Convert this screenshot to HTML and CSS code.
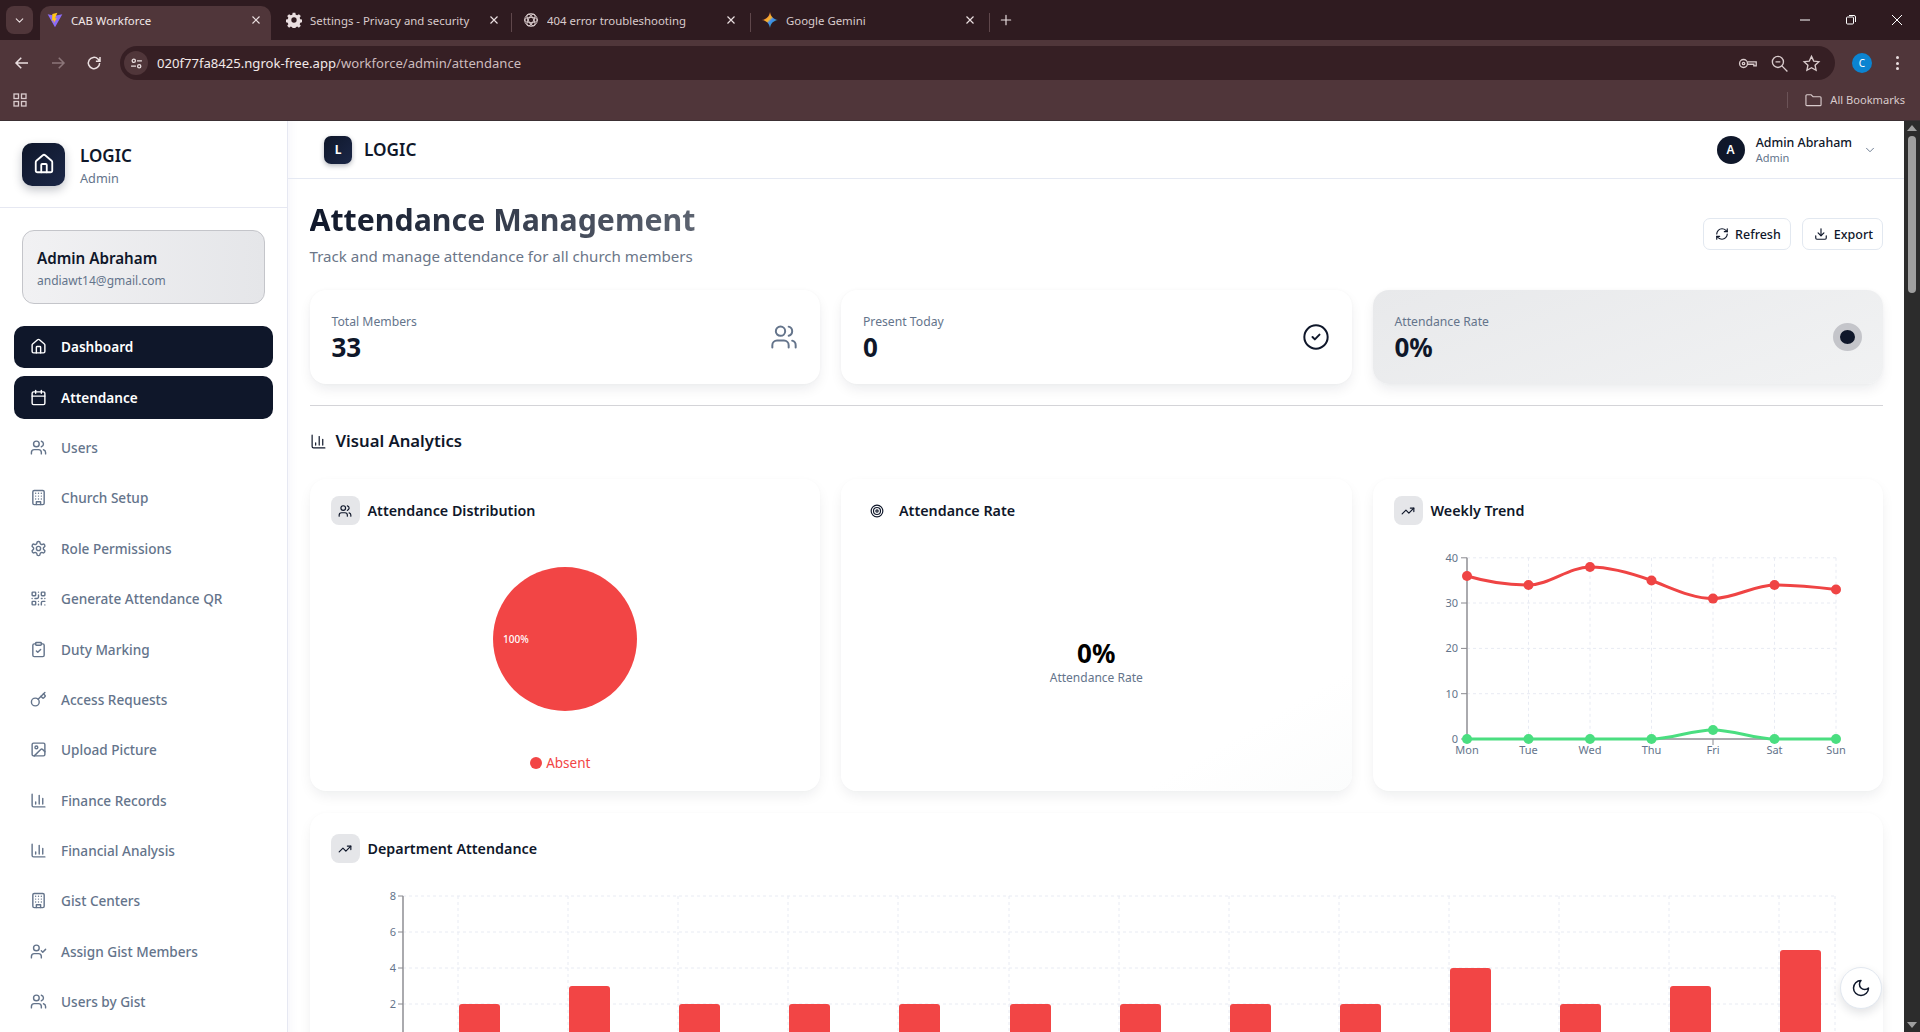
FILE: index.html
```html
<!DOCTYPE html>
<html lang="en">
<head>
    <meta charset="UTF-8" />
    <title>CAB Workforce</title>
    <link rel="stylesheet" href="styles.css">
</head>
<body>
    <svg class="defs" width="0" height="0">
        <symbol id="i-home" viewBox="0 0 24 24"><path d="M15 21v-8a1 1 0 0 0-1-1h-4a1 1 0 0 0-1 1v8"/><path d="M3 10a2 2 0 0 1 .709-1.528l7-5.999a2 2 0 0 1 2.582 0l7 5.999A2 2 0 0 1 21 10v9a2 2 0 0 1-2 2H5a2 2 0 0 1-2-2z"/></symbol>
        <symbol id="i-calendar" viewBox="0 0 24 24"><path d="M8 2v4"/><path d="M16 2v4"/><rect width="18" height="18" x="3" y="4" rx="2"/><path d="M3 10h18"/></symbol>
        <symbol id="i-users" viewBox="0 0 24 24"><path d="M16 21v-2a4 4 0 0 0-4-4H6a4 4 0 0 0-4 4v2"/><circle cx="9" cy="7" r="4"/><path d="M22 21v-2a4 4 0 0 0-3-3.87"/><path d="M16 3.13a4 4 0 0 1 0 7.75"/></symbol>
        <symbol id="i-building" viewBox="0 0 24 24"><rect width="16" height="20" x="4" y="2" rx="2" ry="2"/><path d="M9 22v-4h6v4"/><path d="M8 6h.01M16 6h.01M12 6h.01M12 10h.01M12 14h.01M16 10h.01M16 14h.01M8 10h.01M8 14h.01"/></symbol>
        <symbol id="i-settings" viewBox="0 0 24 24"><path d="M12.22 2h-.44a2 2 0 0 0-2 2v.18a2 2 0 0 1-1 1.73l-.43.25a2 2 0 0 1-2 0l-.15-.08a2 2 0 0 0-2.73.73l-.22.38a2 2 0 0 0 .73 2.73l.15.1a2 2 0 0 1 1 1.72v.51a2 2 0 0 1-1 1.74l-.15.09a2 2 0 0 0-.73 2.73l.22.38a2 2 0 0 0 2.73.73l.15-.08a2 2 0 0 1 2 0l.43.25a2 2 0 0 1 1 1.73V20a2 2 0 0 0 2 2h.44a2 2 0 0 0 2-2v-.18a2 2 0 0 1 1-1.73l.43-.25a2 2 0 0 1 2 0l.15.08a2 2 0 0 0 2.73-.73l.22-.39a2 2 0 0 0-.73-2.73l-.15-.08a2 2 0 0 1-1-1.74v-.5a2 2 0 0 1 1-1.74l.15-.09a2 2 0 0 0 .73-2.73l-.22-.38a2 2 0 0 0-2.73-.73l-.15.08a2 2 0 0 1-2 0l-.43-.25a2 2 0 0 1-1-1.73V4a2 2 0 0 0-2-2z"/><circle cx="12" cy="12" r="3"/></symbol>
        <symbol id="i-qr" viewBox="0 0 24 24"><rect width="5" height="5" x="3" y="3" rx="1"/><rect width="5" height="5" x="16" y="3" rx="1"/><rect width="5" height="5" x="3" y="16" rx="1"/><path d="M21 16h-3a2 2 0 0 0-2 2v3"/><path d="M21 21v.01"/><path d="M12 7v3a2 2 0 0 1-2 2H7"/><path d="M3 12h.01"/><path d="M12 3h.01"/><path d="M12 16v.01"/><path d="M16 12h1"/><path d="M21 12v.01"/><path d="M12 21v-1"/></symbol>
        <symbol id="i-clipboard" viewBox="0 0 24 24"><rect width="8" height="4" x="8" y="2" rx="1" ry="1"/><path d="M16 4h2a2 2 0 0 1 2 2v14a2 2 0 0 1-2 2H6a2 2 0 0 1-2-2V6a2 2 0 0 1 2-2h2"/><path d="m9 14 2 2 4-4"/></symbol>
        <symbol id="i-key" viewBox="0 0 24 24"><path d="m15.5 7.5 2.3 2.3a1 1 0 0 0 1.4 0l2.1-2.1a1 1 0 0 0 0-1.4L19 4"/><path d="m21 2-9.6 9.6"/><circle cx="7.5" cy="15.5" r="5.5"/></symbol>
        <symbol id="i-image" viewBox="0 0 24 24"><rect width="18" height="18" x="3" y="3" rx="2" ry="2"/><circle cx="9" cy="9" r="2"/><path d="m21 15-3.086-3.086a2 2 0 0 0-2.828 0L6 21"/></symbol>
        <symbol id="i-chart" viewBox="0 0 24 24"><path d="M3 3v16a2 2 0 0 0 2 2h16"/><path d="M18 17V9"/><path d="M13 17V5"/><path d="M8 17v-3"/></symbol>
        <symbol id="i-usercheck" viewBox="0 0 24 24"><path d="M16 21v-2a4 4 0 0 0-4-4H6a4 4 0 0 0-4 4v2"/><circle cx="9" cy="7" r="4"/><polyline points="16 11 18 13 22 9"/></symbol>
        <symbol id="i-refresh" viewBox="0 0 24 24"><path d="M3 12a9 9 0 0 1 9-9 9.75 9.75 0 0 1 6.74 2.74L21 8"/><path d="M21 3v5h-5"/><path d="M21 12a9 9 0 0 1-9 9 9.75 9.75 0 0 1-6.74-2.74L3 16"/><path d="M8 16H3v5"/></symbol>
        <symbol id="i-download" viewBox="0 0 24 24"><path d="M21 15v4a2 2 0 0 1-2 2H5a2 2 0 0 1-2-2v-4"/><polyline points="7 10 12 15 17 10"/><line x1="12" x2="12" y1="15" y2="3"/></symbol>
        <symbol id="i-check" viewBox="0 0 24 24"><circle cx="12" cy="12" r="10"/><path d="m9 12 2 2 4-4"/></symbol>
        <symbol id="i-target" viewBox="0 0 24 24"><circle cx="12" cy="12" r="10"/><circle cx="12" cy="12" r="6"/><circle cx="12" cy="12" r="2"/></symbol>
        <symbol id="i-trend" viewBox="0 0 24 24"><polyline points="22 7 13.5 15.5 8.5 10.5 2 17"/><polyline points="16 7 22 7 22 13"/></symbol>
        <symbol id="i-moon" viewBox="0 0 24 24"><path d="M12 3a6 6 0 0 0 9 9 9 9 0 1 1-9-9Z"/></symbol>
        <symbol id="i-chevron" viewBox="0 0 24 24"><path d="m6 9 6 6 6-6"/></symbol>
        <symbol id="i-x" viewBox="0 0 24 24"><path d="M6 6l12 12M18 6 6 18"/></symbol>
    </svg>

    <!-- browser chrome -->
    <header class="chrome">
        <div class="tabstrip">
            <div class="tabsearch"><svg class="ic c-13"><use href="#i-chevron"/></svg></div>
            <div class="tab active">
                <svg class="favicon" viewBox="0 0 24 24"><path d="M1 3.5 12 23 23 3.5 12 5.5z" fill="#8b6cf6"/><path d="M15.5 1 8 3l-.5 10 3-.6-.6 4.6 5-8-3 .6z" fill="#ffc517"/></svg>
                <span class="tabname">CAB Workforce</span>
                <svg class="tabx"><use href="#i-x"/></svg>
            </div>
            <div class="tab second">
                <svg class="favicon" viewBox="0 0 24 24"><path fill="#eadfe0" fill-rule="evenodd" d="M10 1h4l.6 3 2.2.9 2.6-1.7 2.8 2.8-1.7 2.6.9 2.2 3 .6v4l-3 .6-.9 2.2 1.7 2.6-2.8 2.8-2.6-1.7-2.2.9-.6 3h-4l-.6-3-2.2-.9-2.6 1.7-2.8-2.8 1.7-2.6-.9-2.2-3-.6v-4l3-.6.9-2.2-1.7-2.6 2.8-2.8 2.6 1.7 2.2-.9zM12 8a4 4 0 1 0 0 8 4 4 0 0 0 0-8z"/></svg>
                <span class="tabname">Settings - Privacy and security</span>
                <svg class="tabx"><use href="#i-x"/></svg>
            </div>
            <div class="tab sep">
                <svg class="favicon knot" viewBox="0 0 24 24"><circle cx="12" cy="12" r="9.5"/><ellipse cx="12" cy="12" rx="9.5" ry="4"/><ellipse cx="12" cy="12" rx="9.5" ry="4" transform="rotate(60 12 12)"/><ellipse cx="12" cy="12" rx="9.5" ry="4" transform="rotate(120 12 12)"/></svg>
                <span class="tabname">404 error troubleshooting</span>
                <svg class="tabx"><use href="#i-x"/></svg>
            </div>
            <div class="tab sep">
                <svg class="favicon" viewBox="0 0 24 24">
                    <defs><linearGradient id="gem" x1="0" y1="0" x2="1" y2="1"><stop offset="0" stop-color="#ef4a4a"/><stop offset=".45" stop-color="#f7b52c"/><stop offset=".55" stop-color="#3f8cf5"/><stop offset="1" stop-color="#2fae5b"/></linearGradient></defs>
                    <path fill="url(#gem)" d="M12 0c1 6.5 5 11 12 12-7 1-11 5.5-12 12-1-6.5-5-11-12-12 7-1 11-5.5 12-12z"/>
                </svg>
                <span class="tabname">Google Gemini</span>
                <svg class="tabx"><use href="#i-x"/></svg>
            </div>
            <div class="newtab sep"><svg class="ic c-14" viewBox="0 0 24 24"><path d="M12 4v16M4 12h16"/></svg></div>
            <div class="winctl">
                <svg class="ic" viewBox="0 0 12 12"><path d="M1 6h10"/></svg>
                <svg class="ic" viewBox="0 0 12 12"><rect x="1.5" y="3" width="7" height="7" rx="1"/><path d="M4 1.5h5a1.5 1.5 0 0 1 1.5 1.5v5"/></svg>
                <svg class="ic" viewBox="0 0 12 12"><path d="M1 1l10 10M11 1 1 11"/></svg>
            </div>
        </div>
        <div class="toolbar">
            <svg class="nav-btn" viewBox="0 0 24 24"><path d="M20 12H5M11 5l-7 7 7 7"/></svg>
            <svg class="nav-btn dim" viewBox="0 0 24 24"><path d="M4 12h15M13 5l7 7-7 7"/></svg>
            <svg class="nav-btn" viewBox="0 0 24 24"><path d="M19.5 12a7.5 7.5 0 1 1-2.2-5.3L20 9.5M20 4v5.5h-5.5"/></svg>
            <div class="omnibox">
                <span class="tune"><svg viewBox="0 0 24 24"><circle cx="7" cy="7" r="3"/><path d="M13 7h9M2 17h9"/><circle cx="17" cy="17" r="3"/></svg></span>
                <span class="url">020f77fa8425.ngrok-free.app<span class="url-path">/workforce/admin/attendance</span></span>
                <div class="omni-icons">
                    <svg viewBox="0 0 24 24"><circle cx="7" cy="12" r="5"/><circle cx="7" cy="12" r="1.5"/><path d="M12 10h11v5h-3v-2h-8"/></svg>
                    <svg viewBox="0 0 24 24"><circle cx="10" cy="10" r="7"/><path d="M15 15l7 7M7 10h6"/></svg>
                    <svg viewBox="0 0 24 24"><path d="m12 3 2.8 6 6.5.7-4.8 4.4 1.3 6.4L12 17.3 6.2 20.5l1.3-6.4-4.8-4.4L9.2 9z"/></svg>
                </div>
            </div>
            <span class="profile">C</span>
            <span class="kebab"><i></i><i></i><i></i></span>
        </div>
        <div class="bookmarks">
            <svg class="apps" viewBox="0 0 14 14"><rect x="1" y="1" width="4.5" height="4.5"/><rect x="8.5" y="1" width="4.5" height="4.5"/><rect x="1" y="8.5" width="4.5" height="4.5"/><rect x="8.5" y="8.5" width="4.5" height="4.5"/></svg>
            <span class="bm-sep"></span>
            <svg class="folder" viewBox="0 0 18 14"><path d="M1 2.5a1 1 0 0 1 1-1h4.5l2 2H16a1 1 0 0 1 1 1V12a1 1 0 0 1-1 1H2a1 1 0 0 1-1-1z"/></svg>
            <span class="bm-label">All Bookmarks</span>
        </div>
    </header>

    <div class="app">
        <aside class="sidebar">
            <div class="side-head">
                <div class="side-logo"><svg class="ic c-22"><use href="#i-home"/></svg></div>
                <div>
                    <div class="side-brand">LOGIC</div>
                    <div class="side-role">Admin</div>
                </div>
            </div>
            <div class="user-card">
                <div class="user-name">Admin Abraham</div>
                <div class="user-mail">andiawt14@gmail.com</div>
            </div>
            <nav class="menu">
                <a class="menu-item on"><svg class="ic"><use href="#i-home"/></svg>Dashboard</a>
                <a class="menu-item on"><svg class="ic"><use href="#i-calendar"/></svg>Attendance</a>
                <a class="menu-item"><svg class="ic"><use href="#i-users"/></svg>Users</a>
                <a class="menu-item"><svg class="ic"><use href="#i-building"/></svg>Church Setup</a>
                <a class="menu-item"><svg class="ic"><use href="#i-settings"/></svg>Role Permissions</a>
                <a class="menu-item"><svg class="ic"><use href="#i-qr"/></svg>Generate Attendance QR</a>
                <a class="menu-item"><svg class="ic"><use href="#i-clipboard"/></svg>Duty Marking</a>
                <a class="menu-item"><svg class="ic"><use href="#i-key"/></svg>Access Requests</a>
                <a class="menu-item"><svg class="ic"><use href="#i-image"/></svg>Upload Picture</a>
                <a class="menu-item"><svg class="ic"><use href="#i-chart"/></svg>Finance Records</a>
                <a class="menu-item"><svg class="ic"><use href="#i-chart"/></svg>Financial Analysis</a>
                <a class="menu-item"><svg class="ic"><use href="#i-building"/></svg>Gist Centers</a>
                <a class="menu-item"><svg class="ic"><use href="#i-usercheck"/></svg>Assign Gist Members</a>
                <a class="menu-item"><svg class="ic"><use href="#i-users"/></svg>Users by Gist</a>
            </nav>
        </aside>

        <main class="main">
            <div class="topbar">
                <div class="top-brand">
                    <span class="top-logo">L</span>
                    <span class="top-name">LOGIC</span>
                </div>
                <div class="top-user">
                    <span class="avatar">A</span>
                    <div>
                        <div class="top-user-name">Admin Abraham</div>
                        <div class="top-user-role">Admin</div>
                    </div>
                    <svg class="ic c-14 chev"><use href="#i-chevron"/></svg>
                </div>
            </div>

            <div class="content">
                <div class="page-head">
                    <div>
                        <h1>Attendance Management</h1>
                        <p>Track and manage attendance for all church members</p>
                    </div>
                    <div class="actions">
                        <button class="btn"><svg class="ic c-14"><use href="#i-refresh"/></svg>Refresh</button>
                        <button class="btn"><svg class="ic c-14"><use href="#i-download"/></svg>Export</button>
                    </div>
                </div>

                <div class="stats">
                    <div class="stat">
                        <div>
                            <div class="stat-label">Total Members</div>
                            <div class="stat-value">33</div>
                        </div>
                        <svg class="ic c-28 stat-grey"><use href="#i-users"/></svg>
                    </div>
                    <div class="stat">
                        <div>
                            <div class="stat-label">Present Today</div>
                            <div class="stat-value">0</div>
                        </div>
                        <svg class="ic c-28 stat-dark"><use href="#i-check"/></svg>
                    </div>
                    <div class="stat shaded">
                        <div>
                            <div class="stat-label">Attendance Rate</div>
                            <div class="stat-value">0%</div>
                        </div>
                        <span class="rate-dot"></span>
                    </div>
                </div>

                <h2 class="section-title"><svg class="ic"><use href="#i-chart"/></svg>Visual Analytics</h2>

                <div class="charts">
                    <section class="chart-card">
                        <div class="chart-title"><span class="title-ic"><svg class="ic c-14"><use href="#i-users"/></svg></span>Attendance Distribution</div>
                        <svg class="pie" width="468" height="200" viewBox="0 0 468 200">
                            <circle cx="234" cy="99" r="72" fill="#f24545"/>
                            <text x="172" y="103" class="pie-label">100%</text>
                        </svg>
                        <div class="legend"><i></i>Absent</div>
                    </section>

                    <section class="chart-card glow">
                        <div class="chart-title"><span class="title-ic plain"><svg class="ic c-14"><use href="#i-target"/></svg></span>Attendance Rate</div>
                        <div class="rate-box">
                            <div class="rate-big">0%</div>
                            <div class="rate-small">Attendance Rate</div>
                        </div>
                    </section>

                    <section class="chart-card">
                        <div class="chart-title"><span class="title-ic"><svg class="ic c-14"><use href="#i-trend"/></svg></span>Weekly Trend</div>
                        <svg class="line-chart" width="468" height="225" viewBox="0 0 468 225">
                            <g class="grid">
                                <path d="M73 17.8H442M73 63H442M73 108.4H442M73 153.7H442"/>
                                <path d="M134.5 17.8V199M196 17.8V199M257.5 17.8V199M319 17.8V199M380.5 17.8V199M442 17.8V199"/>
                            </g>
                            <path class="axis" d="M73 17.8V199H442"/>
                            <path class="ticks" d="M67 17.8h6M67 63h6M67 108.4h6M67 153.7h6M67 199h6M319 199v6"/>
                            <g class="tick-y">
                                <text x="64" y="22">40</text>
                                <text x="64" y="67">30</text>
                                <text x="64" y="112">20</text>
                                <text x="64" y="158">10</text>
                                <text x="64" y="203">0</text>
                            </g>
                            <g class="tick-x">
                                <text x="73" y="214">Mon</text>
                                <text x="134.5" y="214">Tue</text>
                                <text x="196" y="214">Wed</text>
                                <text x="257.5" y="214">Thu</text>
                                <text x="319" y="214">Fri</text>
                                <text x="380.5" y="214">Sat</text>
                                <text x="442" y="214">Sun</text>
                            </g>
                            <path class="series red" d="M73 36C93.5 42 114 45 134.5 45C155 45 175 27 196 27C217 27 237 33 257.5 40.5C278 48 298 58.6 319 58.6C340 58.6 360 45 380.5 45C401 45 421 47 442 49.5"/>
                            <g class="dots red">
                                <circle cx="73" cy="36" r="5"/><circle cx="134.5" cy="45" r="5"/><circle cx="196" cy="27" r="5"/><circle cx="257.5" cy="40.5" r="5"/><circle cx="319" cy="58.6" r="5"/><circle cx="380.5" cy="45" r="5"/><circle cx="442" cy="49.5" r="5"/>
                            </g>
                            <path class="series green" d="M73 199H257.5C278 199 298 190 319 190C340 190 360 199 380.5 199H442"/>
                            <g class="dots green">
                                <circle cx="73" cy="199" r="5"/><circle cx="134.5" cy="199" r="5"/><circle cx="196" cy="199" r="5"/><circle cx="257.5" cy="199" r="5"/><circle cx="319" cy="190" r="5"/><circle cx="380.5" cy="199" r="5"/><circle cx="442" cy="199" r="5"/>
                            </g>
                        </svg>
                    </section>
                </div>

                <section class="chart-card dept">
                    <div class="chart-title"><span class="title-ic"><svg class="ic c-14"><use href="#i-trend"/></svg></span>Department Attendance</div>
                    <svg class="bar-chart" width="1531" height="200" viewBox="0 0 1531 200">
                        <g class="grid">
                            <path d="M72 16H1504M72 52H1504M72 88H1504M72 124H1504"/>
                            <path d="M127 16V160M237 16V160M347 16V160M457 16V160M567 16V160M678 16V160M788 16V160M898 16V160M1008 16V160M1118 16V160M1228 16V160M1338 16V160M1448 16V160M1504 16V160"/>
                        </g>
                        <path class="axis" d="M72 16V160"/>
                        <path class="ticks" d="M67 16h5M67 52h5M67 88h5M67 124h5"/>
                        <g class="tick-y">
                            <text x="65" y="20">8</text>
                            <text x="65" y="56">6</text>
                            <text x="65" y="92">4</text>
                            <text x="65" y="128">2</text>
                        </g>
                        <g class="bars">
                            <rect x="128" y="124" width="41" height="60" rx="3"/>
                            <rect x="238" y="106" width="41" height="78" rx="3"/>
                            <rect x="348" y="124" width="41" height="60" rx="3"/>
                            <rect x="458" y="124" width="41" height="60" rx="3"/>
                            <rect x="568" y="124" width="41" height="60" rx="3"/>
                            <rect x="679" y="124" width="41" height="60" rx="3"/>
                            <rect x="789" y="124" width="41" height="60" rx="3"/>
                            <rect x="899" y="124" width="41" height="60" rx="3"/>
                            <rect x="1009" y="124" width="41" height="60" rx="3"/>
                            <rect x="1119" y="88" width="41" height="96" rx="3"/>
                            <rect x="1229" y="124" width="41" height="60" rx="3"/>
                            <rect x="1339" y="106" width="41" height="78" rx="3"/>
                            <rect x="1449" y="70" width="41" height="114" rx="3"/>
                        </g>
                    </svg>
                </section>
            </div>

            <button class="theme-btn"><svg class="ic c-20"><use href="#i-moon"/></svg></button>
        </main>

        <div class="scrollbar">
            <i class="arrow up"></i>
            <div class="thumb"></div>
            <i class="arrow down"></i>
        </div>
    </div>
</body>
</html>
```

FILE: styles.css
```css
* { box-sizing: border-box; }
html, body { margin: 0; height: 100%; }
body {
    display: flex;
    flex-direction: column;
    height: 1032px;
    overflow: hidden;
    font-family: "Noto Sans", "Open Sans", sans-serif;
    color: #0f172a;
    background: #fff;
}
.defs { position: absolute; }

.ic {
    width: 17px;
    height: 17px;
    flex: none;
    fill: none;
    stroke: currentColor;
    stroke-width: 2;
    stroke-linecap: round;
    stroke-linejoin: round;
}
.c-13 { width: 13px; height: 13px; }
.c-14 { width: 14px; height: 14px; }
.c-20 { width: 20px; height: 20px; }
.c-22 { width: 22px; height: 22px; }
.c-28 { width: 28px; height: 28px; }

/* browser chrome */
.chrome { flex: none; height: 121px; background: #50363a; color: #eadfe0; font-size: 11.4px; }
.tabstrip { height: 40px; background: #2f1b20; display: flex; align-items: flex-end; padding-left: 6px; }
.tabsearch {
    width: 27px; height: 28px; margin-bottom: 6px; margin-right: 7px;
    background: #50363a; border-radius: 8px;
    display: flex; align-items: center; justify-content: center;
}
.tab {
    width: 239px; height: 34px;
    display: flex; align-items: center;
    padding: 0 12px 6px 12px;
    gap: 8px;
    position: relative;
    color: #d9cbcc;
}
.tab.active { width: 231px; background: #50363a; border-radius: 10px 10px 0 0; color: #f2e9e9; padding-left: 7px; padding-right: 8px; margin-right: 1px; }
.tab.second { padding-left: 14px; padding-right: 10px; }
.tab.sep::before, .newtab.sep::before {
    content: ""; position: absolute; left: 0; top: 7px;
    width: 1px; height: 19px; background: #5f474b;
}
.favicon { width: 16px; height: 16px; flex: none; }
.knot { fill: none; stroke: #d9cbcc; stroke-width: 1.5; }
.tabname { flex: 1; white-space: nowrap; overflow: hidden; }
.tabx { width: 14px; height: 14px; flex: none; fill: none; stroke: #eadfe0; stroke-width: 2; }
.newtab { position: relative; width: 34px; height: 34px; padding-bottom: 6px; display: flex; align-items: center; justify-content: center; color: #eadfe0; }
.winctl { margin-left: auto; height: 40px; display: flex; align-items: center; gap: 34px; padding-right: 17px; }
.winctl .ic { width: 12px; height: 12px; stroke: #fff; stroke-width: 1; stroke-linecap: butt; }

.toolbar { height: 40px; display: flex; align-items: center; padding: 6px 0 0 13px; }
.nav-btn { width: 18px; height: 18px; fill: none; stroke: #eadfe0; stroke-width: 2; margin-right: 18px; flex: none; }
.nav-btn.dim { stroke: #8c7679; }
.omnibox {
    width: 1715px; height: 34px; margin-left: -1px;
    background: #361f24; border-radius: 17px;
    display: flex; align-items: center;
    padding-left: 4px;
}
.tune { width: 24px; height: 24px; border-radius: 50%; background: #50363a; display: flex; align-items: center; justify-content: center; }
.tune svg { width: 13px; height: 13px; fill: none; stroke: #eadfe0; stroke-width: 2.4; }
.url { margin-left: 9px; font-size: 13.1px; color: #f2e9e9; white-space: nowrap; }
.url-path { color: #cdbcbe; }
.omni-icons { margin-left: auto; display: flex; gap: 13px; padding-right: 14px; }
.omni-icons svg { width: 19px; height: 19px; fill: none; stroke: #d9cbcc; stroke-width: 1.7; }
.profile {
    width: 20px; height: 20px; margin-left: 17px;
    border-radius: 50%; background: #0b84d1; color: #fff;
    font-size: 10px; display: flex; align-items: center; justify-content: center;
}
.kebab { margin-left: 24px; display: flex; flex-direction: column; gap: 2.5px; }
.kebab i { width: 3px; height: 3px; border-radius: 50%; background: #eadfe0; }

.bookmarks { height: 41px; display: flex; align-items: center; padding: 0 15px 0 13px; border-bottom: 1px solid #3c3034; }
.apps { width: 14px; height: 14px; fill: none; stroke: #d9cbcc; stroke-width: 1.3; }
.bm-sep { margin-left: auto; width: 1px; height: 16px; background: #6b5357; margin-right: 17px; }
.folder { width: 17px; height: 14px; fill: none; stroke: #d9cbcc; stroke-width: 1.2; margin-right: 8px; }
.bm-label { color: #d9cbcc; font-size: 11.1px; padding-bottom: 2px; }

/* page */
.app { flex: 1; min-height: 0; display: flex; }
.sidebar {
    width: 288px; flex: none;
    border-right: 1px solid #e6e8f2;
    background: #fff;
    overflow: hidden;
}
.side-head {
    height: 87px;
    border-bottom: 1px solid #e6e8f2;
    display: flex; align-items: center; gap: 15px;
    padding-left: 22px;
}
.side-logo {
    width: 43px; height: 43px;
    border-radius: 10px;
    background: linear-gradient(135deg, #0f172a, #1b2747);
    color: #fff;
    display: flex; align-items: center; justify-content: center;
    box-shadow: 0 4px 10px rgba(15, 23, 42, .25);
}
.side-brand { font-size: 17px; font-weight: 600; line-height: 24px; padding-top: 3px; }
.side-role { font-size: 12.7px; color: #64748b; line-height: 20px; }
.user-card {
    margin: 22px 22px 22px 22px;
    height: 74px;
    padding: 16px 14px;
    border: 1px solid #c4c5ca;
    border-radius: 12px;
    background: linear-gradient(90deg, #f1f1f3, #e5e6e9);
}
.user-name { font-size: 15.2px; font-weight: 600; line-height: 22px; }
.user-mail { font-size: 12px; color: #64748b; line-height: 23px; }
.menu { display: flex; flex-direction: column; gap: 8px; margin: 0 14px; }
.menu-item {
    height: 42.4px;
    display: flex; align-items: center; gap: 14px;
    padding-left: 16px;
    padding-bottom: 1px;
    border-radius: 10px;
    font-size: 13.6px; font-weight: 500;
    color: #64748b;
    white-space: nowrap;
}
.menu-item.on { background: #0f172a; color: #fff; font-weight: 600; }

.main { flex: 1; min-width: 0; position: relative; overflow: hidden; background: #fff; box-shadow: inset 12px 0 12px -12px rgba(90, 90, 160, .08); }
.topbar {
    height: 58px;
    border-bottom: 1px solid #e5e9f3;
    display: flex; align-items: center; justify-content: space-between;
    padding: 0 27px 0 36px;
}
.top-brand { display: flex; align-items: center; gap: 12px; }
.top-logo {
    width: 28px; height: 28px; border-radius: 7px;
    background: linear-gradient(135deg, #0f172a, #1b2747);
    color: #fff; font-size: 12px; font-weight: 700;
    display: flex; align-items: center; justify-content: center;
    box-shadow: 0 2px 5px rgba(15, 23, 42, .3);
}
.top-name { font-size: 17.2px; font-weight: 600; }
.top-user { display: flex; align-items: center; gap: 11px; }
.avatar {
    width: 28px; height: 28px; border-radius: 50%;
    background: #0f172a; color: #fff;
    font-size: 12px; font-weight: 600;
    display: flex; align-items: center; justify-content: center;
}
.top-user-name { font-size: 12.4px; font-weight: 500; line-height: 17px; }
.top-user-role { font-size: 11px; color: #64748b; line-height: 14px; }
.chev { color: #64748b; stroke-width: 1.6; }

.content { padding: 21px 21px 0 21.5px; }
.page-head { display: flex; justify-content: space-between; align-items: center; margin-bottom: 22px; }
h1 {
    margin: 0;
    font-size: 30.3px; font-weight: 700; line-height: 40px;
    background: linear-gradient(90deg, #0f172a, #5c6370);
    -webkit-background-clip: text;
    background-clip: text;
    color: transparent;
}
.page-head p { margin: 4px 0 0; font-size: 15.1px; line-height: 24px; color: #6b7688; }
.actions { display: flex; gap: 11px; }
.btn {
    height: 32px;
    display: flex; align-items: center; gap: 6px;
    padding: 0 9px 0 11px;
    background: #fff;
    border: 1px solid #e2e8f0;
    border-radius: 7px;
    font: 500 12.5px "Noto Sans", sans-serif;
    color: #0f172a;
}

.stats { display: grid; grid-template-columns: repeat(3, 1fr); gap: 21px; padding-bottom: 21px; border-bottom: 1px solid #d4d4d8; }
.stat {
    height: 94px;
    padding: 2px 22px 0;
    display: flex; align-items: center; justify-content: space-between;
    background: #fff;
    border-radius: 16px;
    box-shadow: 0 6px 14px -2px rgba(15, 23, 42, .09), 0 0 3px rgba(15, 23, 42, .03);
}
.stat.shaded { background: linear-gradient(160deg, #e8e9eb, #f1f2f3); padding-right: 21px; }
.stat-label { font-size: 12.2px; color: #64748b; line-height: 17px; }
.stat-value { font-size: 26px; font-weight: 700; line-height: 34px; }
.stat-grey { color: #64748b; stroke-width: 1.7; margin-top: -2px; }
.stat-dark { color: #0f172a; stroke-width: 1.7; margin-top: -2px; }
.rate-dot {
    width: 29px; height: 28px; border-radius: 50%;
    background: #0f172a; border: 7px solid #c4c5ca;
    margin-top: -2px;
}

.section-title {
    margin: 23px 0 26px;
    height: 24px;
    display: flex; align-items: center; gap: 9px;
    font-size: 16.7px; font-weight: 600; line-height: 24px;
}
.section-title .ic { width: 17px; height: 17px; stroke-width: 1.7; }

.charts { display: grid; grid-template-columns: repeat(3, 1fr); gap: 21px; margin-bottom: 22px; }
.chart-card {
    height: 312px;
    padding: 17px 21px 0;
    background: #fff;
    border-radius: 16px;
    box-shadow: 0 6px 14px -2px rgba(15, 23, 42, .08), 0 0 3px rgba(15, 23, 42, .02);
}
.chart-card.glow { background: linear-gradient(150deg, #fff 80%, #fbfcfc); }
.chart-title { height: 29px; display: flex; align-items: center; gap: 8px; font-size: 14.3px; font-weight: 600; }
.title-ic {
    width: 29px; height: 29px; border-radius: 8px;
    background: #e5e6e9;
    display: flex; align-items: center; justify-content: center;
}
.title-ic.plain { background: transparent; }
.pie, .line-chart, .bar-chart { display: block; }
.pie { margin-top: 15px; }
.pie-label { fill: #fff; font-size: 10px; font-weight: 500; }
.legend {
    margin-top: 14px;
    display: flex; align-items: center; justify-content: center; gap: 4px;
    padding-right: 9px;
    color: #f24545; font-size: 13.5px;
}
.legend i { width: 12px; height: 12px; border-radius: 50%; background: #f24545; }
.rate-box { height: 220px; margin-top: 15px; padding-top: 21px; display: flex; flex-direction: column; align-items: center; justify-content: center; }
.rate-big { font-size: 26px; font-weight: 700; line-height: 34px; color: #000; }
.rate-small { font-size: 12px; color: #64748b; line-height: 16px; }
.line-chart { margin-top: 15px; }

.grid path { fill: none; stroke: #e8ebf3; stroke-dasharray: 3 3; }
.axis { fill: none; stroke: #aaaaae; stroke-width: 2; }
.ticks { stroke: #8a8a90; stroke-width: 1; }
.tick-y text { fill: #64748b; font-size: 11px; text-anchor: end; }
.tick-x text { fill: #64748b; font-size: 11px; text-anchor: middle; }
.series { fill: none; stroke-width: 3; }
.series.red { stroke: #ef4444; }
.series.green { stroke: #4ade80; }
.dots.red { fill: #ef4444; }
.dots.green { fill: #4ade80; }
.bars rect { fill: #f24545; }
.dept { height: 400px; padding-top: 21px; }
.bar-chart { margin-top: 17px; }

.theme-btn {
    position: absolute;
    right: 22px; bottom: 23px;
    width: 42px; height: 42px;
    border-radius: 50%;
    border: 1px solid #e2e8f0;
    background: #fff;
    color: #0f172a;
    display: flex; align-items: center; justify-content: center;
    box-shadow: 0 4px 10px rgba(15, 23, 42, .12);
}
.theme-btn .ic { stroke-width: 1.8; }

/* page scrollbar */
.scrollbar { width: 16px; flex: none; background: #2c2c2c; display: flex; flex-direction: column; align-items: center; padding-top: 4px; }
.thumb { width: 8px; height: 157px; margin-top: 5px; border-radius: 4px; background: #9f9f9f; }
.arrow { width: 0; height: 0; border-left: 5px solid transparent; border-right: 5px solid transparent; }
.arrow.up { border-bottom: 6px solid #9f9f9f; }
.arrow.down { margin-top: auto; margin-bottom: 4px; border-top: 6px solid #9f9f9f; }
```
